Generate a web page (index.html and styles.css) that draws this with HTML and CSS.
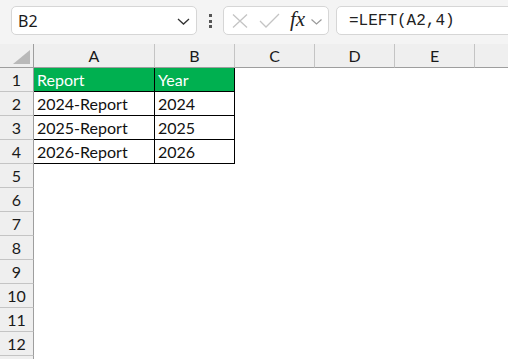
FILE: index.html
```html
<!DOCTYPE html>
<html>
<head>
<meta charset="utf-8">
<link rel="stylesheet" href="styles.css">
</head>
<body>
<div class="toolbar">
  <div class="namebox">
    <span class="ref">B2</span>
    <svg class="chev" width="13" height="7" viewBox="0 0 13 7"><path d="M1 1 L6.5 6 L12 1" fill="none" stroke="#333" stroke-width="1.3"/></svg>
  </div>
  <div class="dots"><i></i><i></i><i></i></div>
  <div class="fxbox">
    <svg class="ico-x" width="16" height="14" viewBox="0 0 16 14"><path d="M1 0.5 L15 13.5 M15 0.5 L1 13.5" stroke="#c4c4c4" stroke-width="1.3" fill="none"/></svg>
    <svg class="ico-ok" width="21" height="15" viewBox="0 0 21 15"><path d="M1 8 L7 14 L20 1" stroke="#c4c4c4" stroke-width="1.3" fill="none"/></svg>
    <span class="fx">fx</span>
    <svg class="chev-s" width="11" height="6" viewBox="0 0 11 6"><path d="M0.5 0.5 L5.5 5 L10.5 0.5" fill="none" stroke="#9a9a9a" stroke-width="1.2"/></svg>
  </div>
  <div class="formula">=LEFT(A2,4)</div>
</div>
<div class="sheet">
  <div class="corner"><svg width="17" height="14" viewBox="0 0 17 14"><path d="M17 0 L17 14 L0 14 Z" fill="#b9b9b9"/></svg></div>
  <div class="ch">A</div><div class="ch">B</div><div class="ch">C</div><div class="ch">D</div><div class="ch">E</div><div class="ch last"></div>

  <div class="rh">1</div><div class="c t hd">Report</div><div class="c t hd">Year</div><div class="c"></div><div class="c"></div><div class="c"></div><div class="c"></div>
  <div class="rh">2</div><div class="c t">2024-Report</div><div class="c t">2024</div><div class="c"></div><div class="c"></div><div class="c"></div><div class="c"></div>
  <div class="rh">3</div><div class="c t">2025-Report</div><div class="c t">2025</div><div class="c"></div><div class="c"></div><div class="c"></div><div class="c"></div>
  <div class="rh">4</div><div class="c t">2026-Report</div><div class="c t">2026</div><div class="c"></div><div class="c"></div><div class="c"></div><div class="c"></div>
  <div class="rh">5</div><div class="c"></div><div class="c"></div><div class="c"></div><div class="c"></div><div class="c"></div><div class="c"></div>
  <div class="rh">6</div><div class="c"></div><div class="c"></div><div class="c"></div><div class="c"></div><div class="c"></div><div class="c"></div>
  <div class="rh">7</div><div class="c"></div><div class="c"></div><div class="c"></div><div class="c"></div><div class="c"></div><div class="c"></div>
  <div class="rh">8</div><div class="c"></div><div class="c"></div><div class="c"></div><div class="c"></div><div class="c"></div><div class="c"></div>
  <div class="rh">9</div><div class="c"></div><div class="c"></div><div class="c"></div><div class="c"></div><div class="c"></div><div class="c"></div>
  <div class="rh">10</div><div class="c"></div><div class="c"></div><div class="c"></div><div class="c"></div><div class="c"></div><div class="c"></div>
  <div class="rh">11</div><div class="c"></div><div class="c"></div><div class="c"></div><div class="c"></div><div class="c"></div><div class="c"></div>
  <div class="rh">12</div><div class="c"></div><div class="c"></div><div class="c"></div><div class="c"></div><div class="c"></div><div class="c"></div>
  <div class="rh"></div><div class="c"></div><div class="c"></div><div class="c"></div><div class="c"></div><div class="c"></div><div class="c"></div>
</div>
</body>
</html>
```
FILE: styles.css
```css
* { box-sizing: border-box; }
html, body { margin: 0; padding: 0; }
body {
  width: 508px;
  height: 359px;
  overflow: hidden;
  background: #ffffff;
  font-family: Lato, "Liberation Sans", sans-serif;
  color: #1a1a1a;
}
.toolbar {
  height: 44px;
  background: #f4f4f4;
  display: flex;
  align-items: flex-start;
  padding: 6px 0 0 11px;
  overflow: hidden;
}
.namebox {
  width: 186px;
  height: 29px;
  background: #fff;
  border: 1px solid #d6d6d6;
  border-radius: 5px;
  display: flex;
  align-items: center;
  justify-content: space-between;
  padding: 0 6px 0 6px;
}
.ref {
  font-family: "Noto Sans", "Open Sans", sans-serif;
  font-size: 16px;
  color: #1a1a1a;
}
.chev { margin-top: 1px; }
.dots {
  width: 3px;
  margin-left: 12px;
  padding-top: 8px;
  display: flex;
  flex-direction: column;
  gap: 2.5px;
}
.dots i {
  display: block;
  width: 3px;
  height: 3px;
  background: #555;
}
.fxbox {
  margin-left: 11px;
  width: 106px;
  height: 29px;
  background: #fff;
  border: 1px solid #d6d6d6;
  border-radius: 5px;
  display: flex;
  align-items: center;
  padding-left: 8px;
}
.ico-x { margin-top: 1px; }
.ico-ok { margin-left: 11px; }
.fx {
  margin-left: 10px;
  font-family: "Liberation Serif", serif;
  font-style: italic;
  font-size: 21px;
  color: #222;
  line-height: 1;
  margin-top: -3px;
}
.chev-s { margin-left: 6px; margin-top: 2px; }
.formula {
  margin-left: 7px;
  flex: 1;
  margin-right: -10px;
  height: 29px;
  background: #fff;
  border: 1px solid #d6d6d6;
  border-radius: 5px;
  font-family: "Liberation Mono", monospace;
  font-size: 16px;
  color: #222;
  display: flex;
  align-items: center;
  padding-left: 12px;
}
.sheet {
  display: grid;
  grid-template-columns: 34px 121px 80px 80px 80px 80px 1fr;
  grid-auto-rows: 24px;
  font-size: 16px;
}
.corner {
  background: #efefef;
  border-right: 1px solid #9e9e9e;
  border-bottom: 1px solid #9e9e9e;
  display: flex;
  align-items: flex-end;
  justify-content: flex-end;
  padding: 0 3px 3px 0;
}
.ch {
  background: #efefef;
  border-right: 1px solid #c4c4c4;
  border-bottom: 1px solid #9e9e9e;
  display: flex;
  align-items: center;
  justify-content: center;
  font-size: 16px;
  color: #1a1a1a;
}
.ch.last { border-right: none; }
.rh {
  background: #efefef;
  border-right: 1px solid #9e9e9e;
  border-bottom: 1px solid #c4c4c4;
  display: flex;
  align-items: center;
  justify-content: center;
  font-size: 16px;
  color: #1a1a1a;
}
.c {
  border-right: 1px solid transparent;
  border-bottom: 1px solid transparent;
  line-height: 23px;
  padding-left: 3px;
  white-space: nowrap;
  color: #111;
}
.c.t {
  border-right-color: #000;
  border-bottom-color: #000;
}
.c.hd {
  background: #00b050;
  color: #ffffff;
}
```
